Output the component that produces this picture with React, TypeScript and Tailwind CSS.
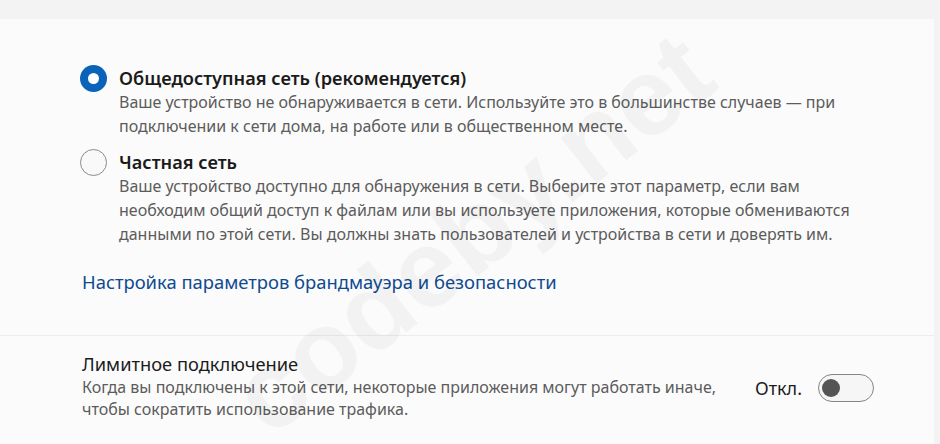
import React from "react";

const font = { fontFamily: '"Segoe UI", "Noto Sans", "Open Sans", sans-serif' };

function Radio({ checked }: { checked: boolean }) {
  return checked ? (
    <div className="w-[27px] h-[27px] rounded-full bg-[#0a63b8] flex items-center justify-center shrink-0">
      <div className="w-[11px] h-[11px] rounded-full bg-white" />
    </div>
  ) : (
    <div className="w-[27px] h-[27px] rounded-full border-[1.5px] border-[#8a8a8a] bg-[#f9f9f9] shrink-0" />
  );
}

function Option({ checked, title, lines }: { checked: boolean; title: string; lines: string[] }) {
  return (
    <div className="flex gap-[12px]">
      <div className="h-[24px] flex items-center pt-[1px]">
        <Radio checked={checked} />
      </div>
      <div>
        <div className="text-[18.2px] leading-[24px] font-semibold text-[#1b1b1b]">{title}</div>
        {lines.map((l, i) => (
          <div key={i} className="text-[16px] leading-[24px] text-[#5c5c5c] whitespace-nowrap">
            {l}
          </div>
        ))}
      </div>
    </div>
  );
}

export default function App() {
  return (
    <div className="w-[940px] h-[444px] bg-[#f3f3f3] overflow-hidden relative flex flex-col" style={font}>
      <div className="h-[19px] shrink-0" />
      <div className="flex-1 mr-[6px] bg-[#fbfbfb] flex flex-col">
        <div className="pl-[80px] pt-[47px] flex flex-col gap-[12px]">
          <Option
            checked
            title="Общедоступная сеть (рекомендуется)"
            lines={[
              "Ваше устройство не обнаруживается в сети. Используйте это в большинстве случаев — при",
              "подключении к сети дома, на работе или в общественном месте.",
            ]}
          />
          <Option
            checked={false}
            title="Частная сеть"
            lines={[
              "Ваше устройство доступно для обнаружения в сети. Выберите этот параметр, если вам",
              "необходим общий доступ к файлам или вы используете приложения, которые обмениваются",
              "данными по этой сети. Вы должны знать пользователей и устройства в сети и доверять им.",
            ]}
          />
        </div>
        <div className="pl-[82px] mt-[24px] text-[18.4px] leading-[24px] text-[#0f4a91]">
          Настройка параметров брандмауэра и безопасности
        </div>
        <div className="mt-[41px] h-px bg-[#ececec]" />
        <div className="pl-[82px] pr-[60px] pt-[16px] flex items-center">
          <div className="flex-1">
            <div className="text-[18.3px] leading-[24px] text-[#1b1b1b]">Лимитное подключение</div>
            <div className="text-[16px] leading-[22px] text-[#5c5c5c] whitespace-nowrap">
              Когда вы подключены к этой сети, некоторые приложения могут работать иначе,
            </div>
            <div className="text-[16px] leading-[22px] text-[#5c5c5c]">
              чтобы сократить использование трафика.
            </div>
          </div>
          <div className="flex items-center gap-[16px] mt-[4px]">
            <span className="text-[18px] text-[#1b1b1b]">Откл.</span>
            <div className="w-[56px] h-[28px] rounded-full border-[1.5px] border-[#858585] bg-[#f6f6f6] flex items-center pl-[3px]">
              <div className="w-[18px] h-[18px] rounded-full bg-[#555555]" />
            </div>
          </div>
        </div>
      </div>
      <div
        className="absolute left-[185px] top-[150px] text-[110px] font-bold text-[#000000] opacity-[0.03] pointer-events-none select-none whitespace-nowrap"
        style={{ transform: "rotate(-38deg)", fontFamily: '"Liberation Sans", sans-serif' }}
      >
        codeby.net
      </div>
    </div>
  );
}
